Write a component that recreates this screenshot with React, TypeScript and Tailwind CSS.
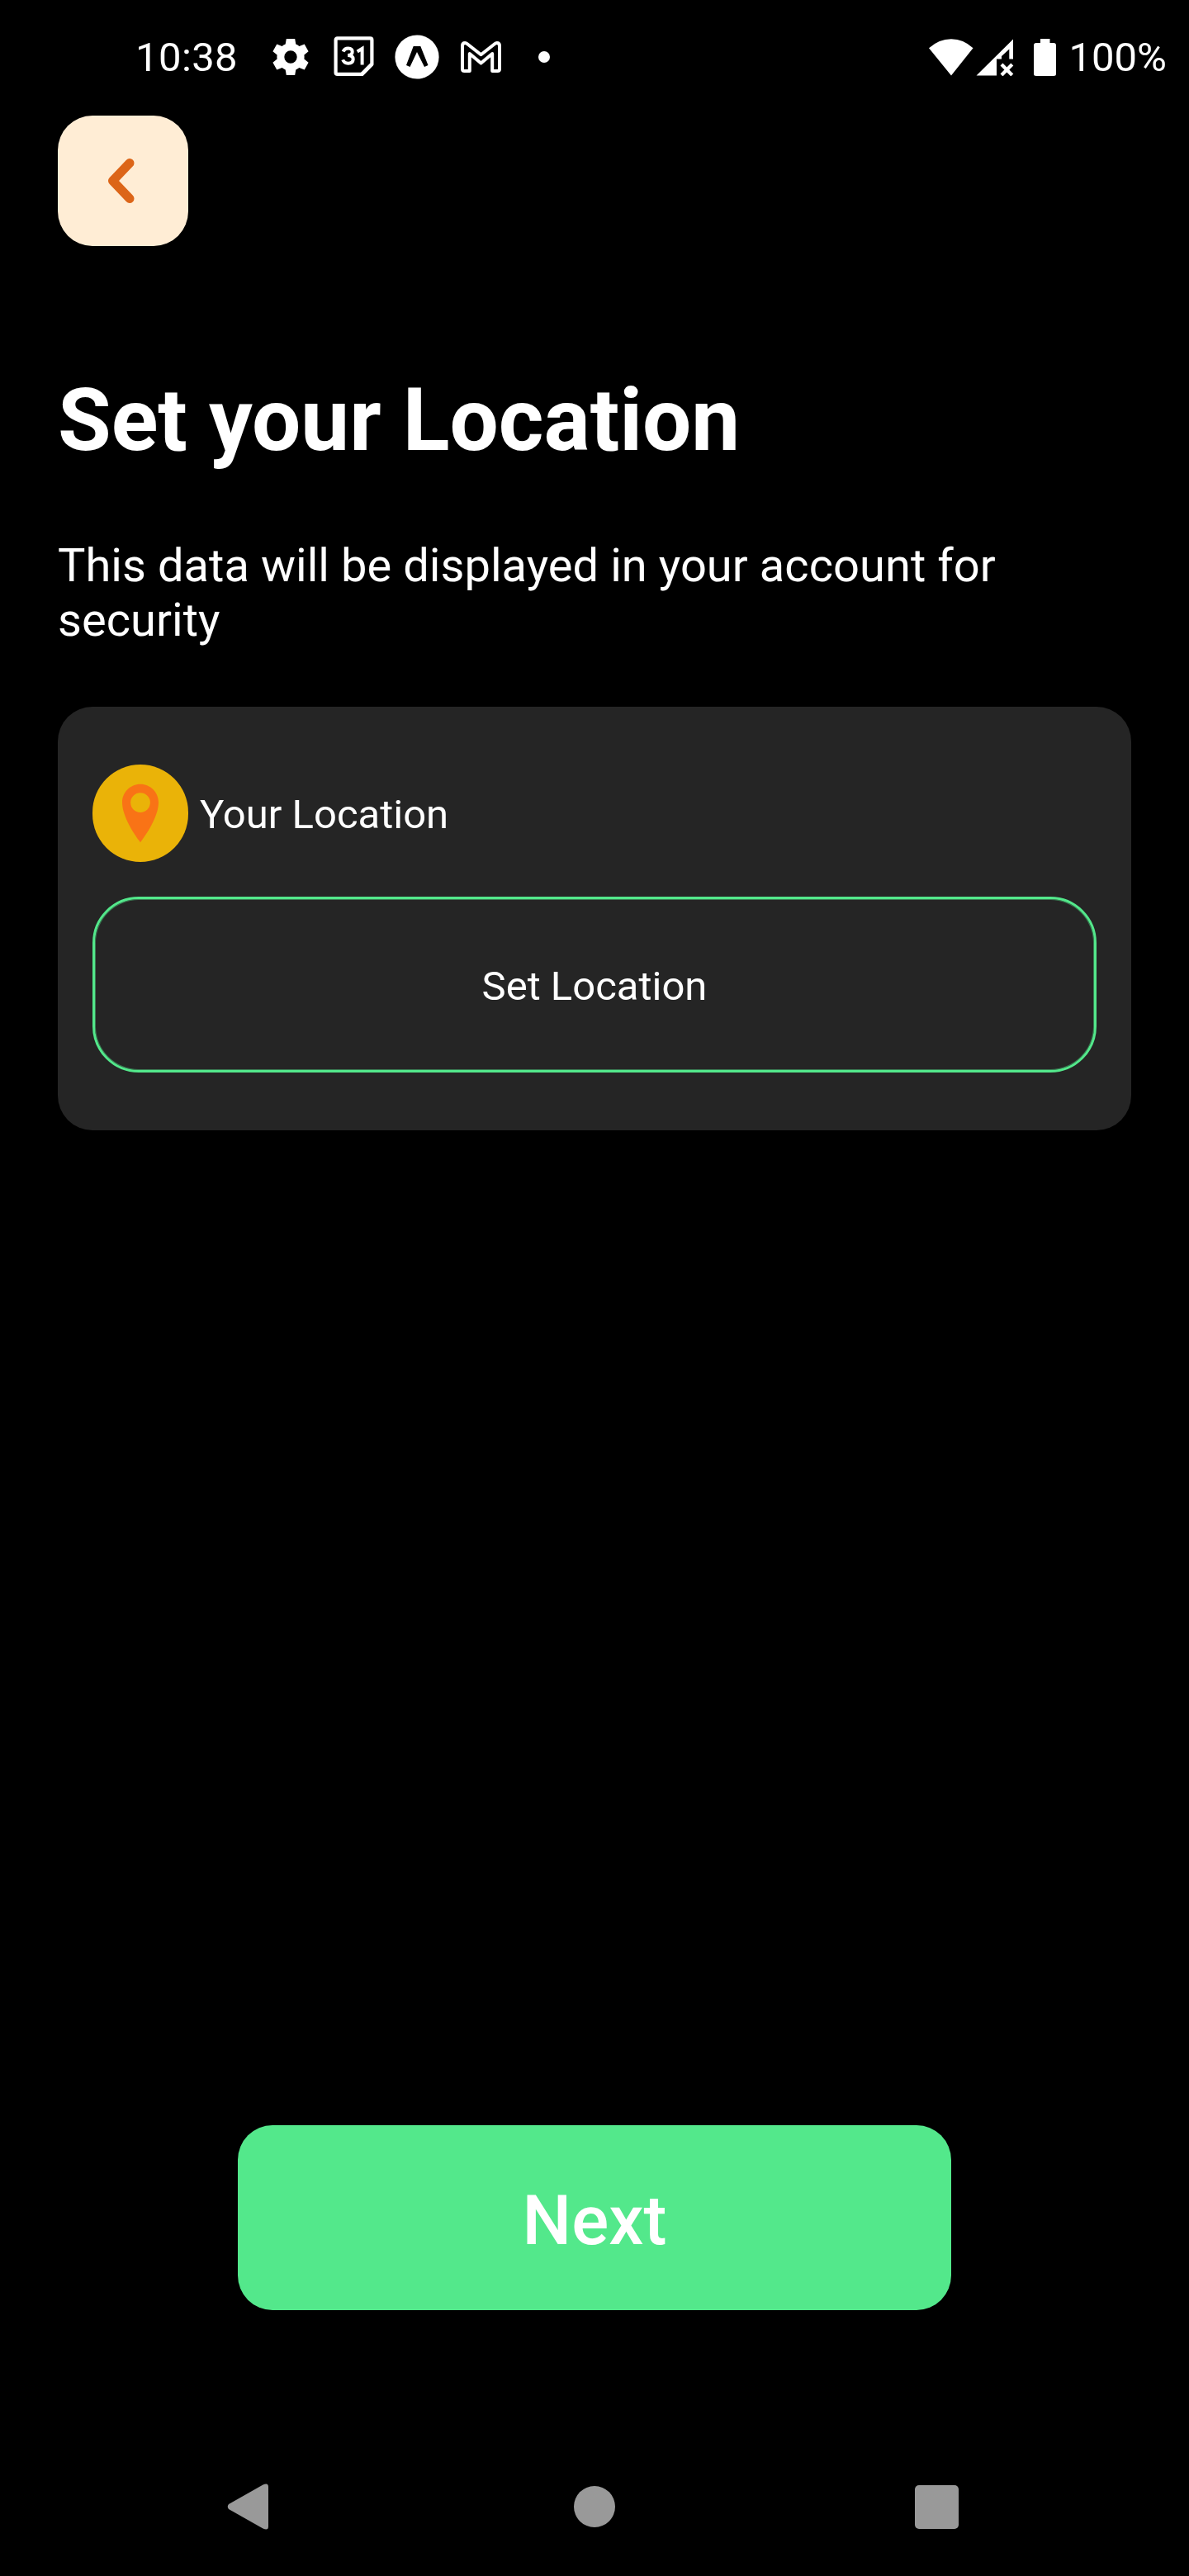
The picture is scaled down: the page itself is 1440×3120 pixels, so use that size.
function StatusBar() {
  return (
    <header className="flex h-[140px] items-start justify-between pl-[164px] pr-[27px] pt-[38px] text-[49px] leading-[62px]">
      <div className="flex h-[62px] items-center">
        <span className="w-[166px] pt-[2px] tracking-[0.4px]">10:38</span>
        <svg className="h-[46px] w-[44px]" viewBox="0 0 44 46" fill="#fff">
          <path
            fillRule="evenodd"
            d="M16.8 1H27.2L28.3 7.6Q30.6 8.5 32.4 9.9L38.7 7.5L43.6 16.2L38.4 20.4Q38.8 23 38.4 25.6L43.6 29.8L38.7 38.5L32.4 36.1Q30.6 37.5 28.3 38.4L27.2 45H16.8L15.7 38.4Q13.4 37.5 11.6 36.1L5.3 38.5L.4 29.8L5.6 25.6Q5.2 23 5.6 20.4L.4 16.2L5.3 7.5L11.6 9.9Q13.4 8.5 15.7 7.6ZM22 15.3A7.7 7.7 0 1 0 22 30.7A7.7 7.7 0 1 0 22 15.3Z"
          />
        </svg>
        <svg className="ml-[30px] h-[50px] w-[50px]" viewBox="0 0 50 50" fill="none" stroke="#fff">
          <path strokeWidth="4.2" strokeLinejoin="round" d="M4.6 2.4H44.4Q46.4 2.4 46.4 4.4V34.1L34.6 45.9H4.6Q2.6 45.9 2.6 43.9V4.4Q2.6 2.4 4.6 2.4Z" />
          <path strokeWidth="2" d="M33.6 44.6L45 33.2" />
          <path strokeWidth="4" d="M11.6 18.4Q13.2 14.5 17.7 14.5Q22.7 14.6 22.7 18.8Q22.7 22.9 17.2 23.1Q23.7 23.2 23.7 27.8Q23.4 32.6 17.7 32.7Q12.8 32.6 11.2 28.4M28.7 18.5L34.6 14.8V34.6" />
        </svg>
        <svg className="ml-[24px] h-[54px] w-[54px]" viewBox="0 0 54 54">
          <circle cx="27" cy="27" r="26.6" fill="#fff" />
          <path fill="#000" d="M22.7 14H31.3L40.5 37L36 39L27 21L18.5 39L14 37Z" />
        </svg>
        <svg className="ml-[25px] h-[40px] w-[51px]" viewBox="0 0 51 40" fill="none" stroke="#fff">
          <path strokeWidth="4" strokeLinejoin="round" d="M11.8 16V37H5.5Q3 37 3 34.5V6.5Q3 3 6.2 3Q7.5 3 9 4.2L25.5 17.2L42 4.2Q43.5 3 44.8 3Q48 3 48 6.5V34.5Q48 37 45.5 37H39.2V16L25.5 27.5Z" />
        </svg>
        <span className="ml-[44px] mt-[-1px] size-[14px] rounded-full bg-white" />
      </div>
      <div className="flex h-[62px] items-center">
        <svg className="h-[46px] w-[160px]" viewBox="0 0 160 46" fill="#fff">
          <path d="M0 12.3Q12 1.2 27 1.2T53.5 12.3L27 45.5Z" />
          <path d="M57.5 45.6L102 1.5V25.6H97.3V13.5L88 22V25.6H82V45.6Z" />
          <path fill="none" stroke="#fff" strokeWidth="4.2" d="M88 32L100.8 45M100.8 32L88 45" />
          <path d="M135 1H146.5V6H151Q154 6 154 9V43.5Q154 46 151 46H130Q127 46 127 43.5V9Q127 6 130 6H135Z" />
        </svg>
        <span className="ml-[9px] pt-[2px]">100%</span>
      </div>
    </header>
  );
}

function NavBar() {
  return (
    <footer className="mt-[210px] flex h-[56px] items-center pl-[275px]">
      <svg className="h-[56px] w-[50px]" viewBox="0 0 50 56" fill="#999">
        <path d="M2 25L43.5 1.5Q50 -1.5 50 4V52Q50 57.5 43.5 54.5L2 31Q-.5 28 2 25Z" />
      </svg>
      <span className="ml-[370px] size-[50px] rounded-full bg-[#999]" />
      <span className="ml-[363px] size-[53px] rounded-[5px] bg-[#999]" />
    </footer>
  );
}

export default function App() {
  return (
    <div className="flex h-[3120px] w-[1440px] flex-col overflow-hidden bg-black font-[Roboto,sans-serif] text-white">
      <StatusBar />
      <main className="flex flex-col px-[70px]">
        <button className="flex size-[158px] items-center justify-center rounded-[42px] bg-[#ffedd5]">
          <svg className="mr-[4px] h-[56px] w-[34px]" viewBox="0 0 34 56" fill="none" stroke="#dc6518" strokeWidth="11" strokeLinecap="round" strokeLinejoin="round">
            <path d="M27 6.5L6.5 28L27 49.5" />
          </svg>
        </button>
        <h1 className="mt-[150px] text-[105px] font-bold leading-[123px]">Set your Location</h1>
        <p className="mt-[81px] w-[1200px] text-[56px] leading-[66px] tracking-[0.05px]">
          This data will be displayed in your account for security
        </p>
        <section className="mt-[72px] flex h-[513px] flex-col rounded-[42px] bg-[#252525] px-[42px] pt-[70px]">
          <div className="flex items-center gap-[14px]">
            <div className="flex h-[118px] w-[116px] items-center justify-center rounded-full bg-[#eab308]">
              <svg className="size-[88px]" viewBox="0 0 20 20" fill="#f97316">
                <path d="M10 2.009c-2.762 0-5 2.229-5 4.99c0 4.774 5 11 5 11s5-6.227 5-11c0-2.76-2.238-4.99-5-4.99zm0 7.751a2.7 2.7 0 1 1 0-5.4a2.7 2.7 0 0 1 0 5.4z" />
              </svg>
            </div>
            <span className="mt-[3px] text-[49px] leading-[58px]">Your Location</span>
          </div>
          <button className="mt-[42px] flex h-[213px] items-center justify-center rounded-[56px] border-[3px] border-[#53e88b] pt-[5px] text-[49px] leading-[58px] shadow-[inset_0_0_0_1px_rgba(83,232,139,0.45)]">
            Set Location
          </button>
        </section>
        <button className="mt-[1205px] flex h-[224px] w-[864px] items-center justify-center self-center rounded-[42px] bg-[#53e88b] pt-[8px] text-[84px] font-medium leading-[98px]">
          Next
        </button>
      </main>
      <NavBar />
    </div>
  );
}
